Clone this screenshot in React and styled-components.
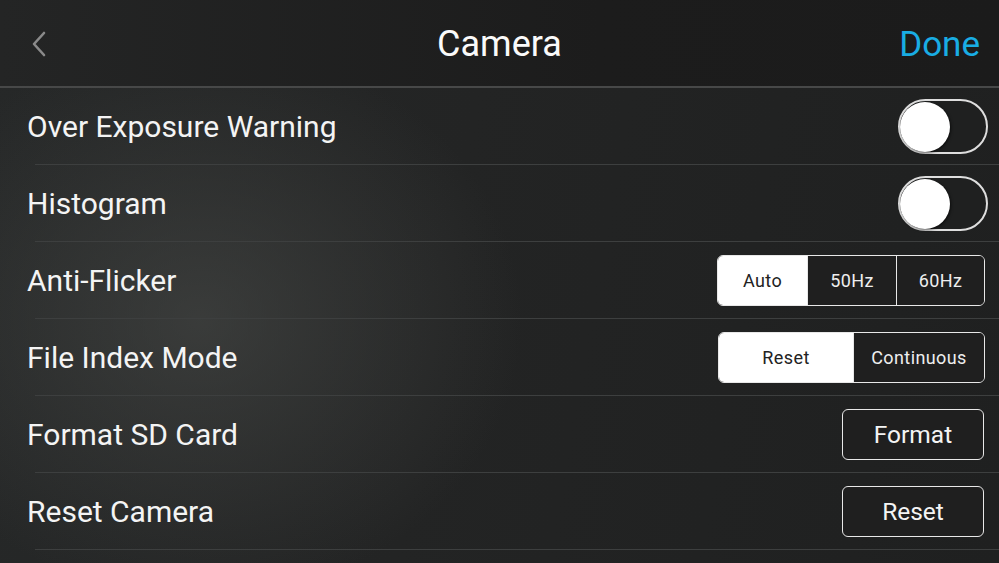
import React, { useState } from "react";
import styled, { createGlobalStyle } from "styled-components";

const Global = createGlobalStyle`
  html, body {
    margin: 0;
    padding: 0;
    background: #1c1c1c;
  }
  body {
    font-family: Roboto, "Noto Sans", sans-serif;
    -webkit-font-smoothing: antialiased;
  }
`;

const Screen = styled.div`
  width: 999px;
  height: 563px;
  overflow: hidden;
  display: flex;
  flex-direction: column;
  color: #f2f2f2;
  background:
    radial-gradient(ellipse 460px 400px at 200px 320px, rgba(72, 74, 72, 0.6), rgba(72, 74, 72, 0) 70%),
    linear-gradient(100deg, #262828 0%, #232424 45%, #1f2020 100%);
`;

const Header = styled.header`
  height: 88px;
  flex: 0 0 88px;
  box-sizing: border-box;
  padding-top: 2px;
  display: grid;
  grid-template-columns: 120px 1fr 120px;
  align-items: center;
  background: linear-gradient(90deg, #242525 0%, #1c1c1c 60%, #1b1b1b 100%);
  border-bottom: 2px solid #474848;
`;

const Back = styled.button`
  justify-self: start;
  margin-left: 31px;
  padding: 0;
  border: 0;
  background: none;
  display: flex;
  cursor: pointer;
`;

const Title = styled.h1`
  margin: 0;
  text-align: center;
  font-size: 36px;
  font-weight: 400;
  color: #fafafa;
`;

const Done = styled.button`
  justify-self: end;
  margin-right: 19px;
  padding: 0;
  border: 0;
  background: none;
  font-family: inherit;
  font-size: 35px;
  color: #19ade4;
  cursor: pointer;
`;

const List = styled.ul`
  list-style: none;
  margin: 0;
  padding: 0;
`;

const Row = styled.li`
  height: 77px;
  box-sizing: border-box;
  display: flex;
  align-items: center;
  justify-content: space-between;
  padding: 0 14px 0 27px;
  background: linear-gradient(#3d3f3f, #3d3f3f) no-repeat 35px 100% / calc(100% - 35px) 1.5px;
`;

const Label = styled.span`
  font-size: 30px;
  color: #f4f4f4;
`;

const Track = styled.button`
  width: 90px;
  height: 55px;
  margin-right: -3px;
  box-sizing: border-box;
  padding: 0;
  border: 2px solid #dedede;
  border-radius: 28px;
  background: ${p => (p.$on ? "#19ade4" : "#1f2020")};
  display: flex;
  align-items: center;
  justify-content: ${p => (p.$on ? "flex-end" : "flex-start")};
  cursor: pointer;
`;

const Knob = styled.span`
  width: 50px;
  height: 50px;
  border-radius: 50%;
  background: #fff;
  box-shadow: 1px 1px 3px rgba(0, 0, 0, 0.6);
`;

const Segments = styled.div`
  display: flex;
  height: 51px;
  box-sizing: border-box;
  border: 1.5px solid #e8e8e8;
  border-radius: 6px;
  overflow: hidden;
`;

const Segment = styled.button`
  width: ${p => p.$w}px;
  padding: 0;
  border: 0;
  border-left: ${p => (p.$first ? "0" : "1.5px solid #e8e8e8")};
  background: ${p => (p.$active ? "#ffffff" : "#1f1f1f")};
  color: ${p => (p.$active ? "#222" : "#eeeeee")};
  font-family: inherit;
  font-size: 18px;
  letter-spacing: 0.4px;
  cursor: pointer;
`;

const Action = styled.button`
  width: 142px;
  height: 51px;
  margin-right: 1px;
  box-sizing: border-box;
  border: 1.5px solid #e8e8e8;
  border-radius: 6px;
  background: #1f1f1f;
  color: #f4f4f4;
  font-family: inherit;
  font-size: 24.5px;
  cursor: pointer;
`;

const Toggle = ({ on, onChange }) => (
  <Track $on={on} onClick={() => onChange(!on)}>
    <Knob />
  </Track>
);

const SegmentGroup = ({ options, value, onChange, width }) => (
  <Segments>
    {options.map((o, i) => (
      <Segment
        key={o}
        $w={width[i]}
        $first={i === 0}
        $active={o === value}
        onClick={() => onChange(o)}
      >
        {o}
      </Segment>
    ))}
  </Segments>
);

const App = () => {
  const [overExposure, setOverExposure] = useState(false);
  const [histogram, setHistogram] = useState(false);
  const [flicker, setFlicker] = useState("Auto");
  const [indexMode, setIndexMode] = useState("Reset");

  return (
    <>
      <Global />
      <Screen>
        <Header>
          <Back aria-label="Back">
            <svg width="16" height="26" viewBox="0 0 16 26">
              <path d="M13 2 L3 13 L13 24" fill="none" stroke="#8a8a8a" strokeWidth="2.6" strokeLinecap="round" strokeLinejoin="round" />
            </svg>
          </Back>
          <Title>Camera</Title>
          <Done>Done</Done>
        </Header>
        <List>
          <Row>
            <Label>Over Exposure Warning</Label>
            <Toggle on={overExposure} onChange={setOverExposure} />
          </Row>
          <Row>
            <Label>Histogram</Label>
            <Toggle on={histogram} onChange={setHistogram} />
          </Row>
          <Row>
            <Label>Anti-Flicker</Label>
            <SegmentGroup
              options={["Auto", "50Hz", "60Hz"]}
              width={[89, 89, 88]}
              value={flicker}
              onChange={setFlicker}
            />
          </Row>
          <Row>
            <Label>File Index Mode</Label>
            <SegmentGroup
              options={["Reset", "Continuous"]}
              width={[134, 131]}
              value={indexMode}
              onChange={setIndexMode}
            />
          </Row>
          <Row>
            <Label>Format SD Card</Label>
            <Action>Format</Action>
          </Row>
          <Row>
            <Label>Reset Camera</Label>
            <Action>Reset</Action>
          </Row>
        </List>
      </Screen>
    </>
  );
};

export default App;
